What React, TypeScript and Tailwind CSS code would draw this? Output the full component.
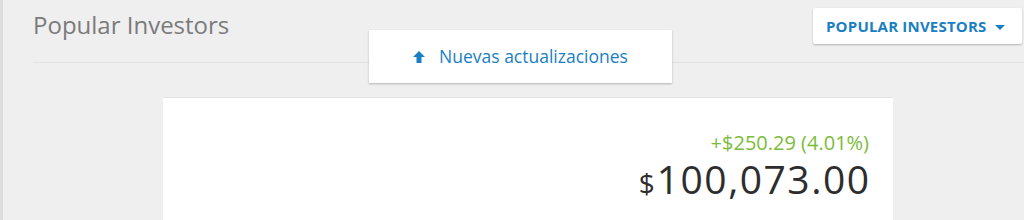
import React from 'react';

export default function App() {
  return (
    <div
      className="relative h-[220px] w-[1024px] overflow-hidden bg-[#efefef] border-l-[3px] border-[#dcdcdc]"
      style={{ fontFamily: '"Open Sans", "Noto Sans", sans-serif' }}
    >
      <div className="ml-[30px] flex items-start justify-between border-b border-[#e2e2e2] h-[63px]">
        <h1 className="pt-[7px] text-[24px] leading-[36px] text-[#7b7b7b]">Popular Investors</h1>
        <button className="mt-[8px] mr-[2px] flex h-[36px] w-[209px] items-center gap-[8px] rounded-[2px] bg-white pl-[13px] shadow-[0_1px_2px_rgba(0,0,0,0.25)]">
          <span className="text-[15px] font-bold tracking-[0.2px] text-[#1a7fc2]">POPULAR INVESTORS</span>
          <svg width="10" height="6" viewBox="0 0 10 6" className="mt-[3px]">
            <path d="M0 0h10L5 5z" fill="#1a7fc2" />
          </svg>
        </button>
      </div>

      <div className="absolute left-[366px] top-[30px] flex h-[53px] w-[303px] items-center justify-center gap-[14px] bg-white shadow-[0_1px_2px_rgba(0,0,0,0.25)]">
        <svg width="12" height="12" viewBox="0 0 12 12" className="mt-[1px]">
          <path d="M6 0L12 6H8.5V12H3.5V6H0Z" fill="#1a7fc2" />
        </svg>
        <span className="text-[17.5px] text-[#1a7fc2]">Nuevas actualizaciones</span>
      </div>

      <div className="ml-[160px] mt-[34px] h-[130px] w-[730px] bg-white border-t border-[#e4e4e4] pr-[24px] pt-[32px] text-right">
        <div className="text-[20px] leading-[26px] text-[#7dbb3b]">+$250.29 (4.01%)</div>
        <div className="leading-[46px] text-[#2d2d2d]">
          <span className="mr-[2px] text-[28px]">$</span>
          <span className="mr-[-1.5px] text-[39px] font-medium tracking-[1.5px]">100,073.00</span>
        </div>
      </div>
    </div>
  );
}
